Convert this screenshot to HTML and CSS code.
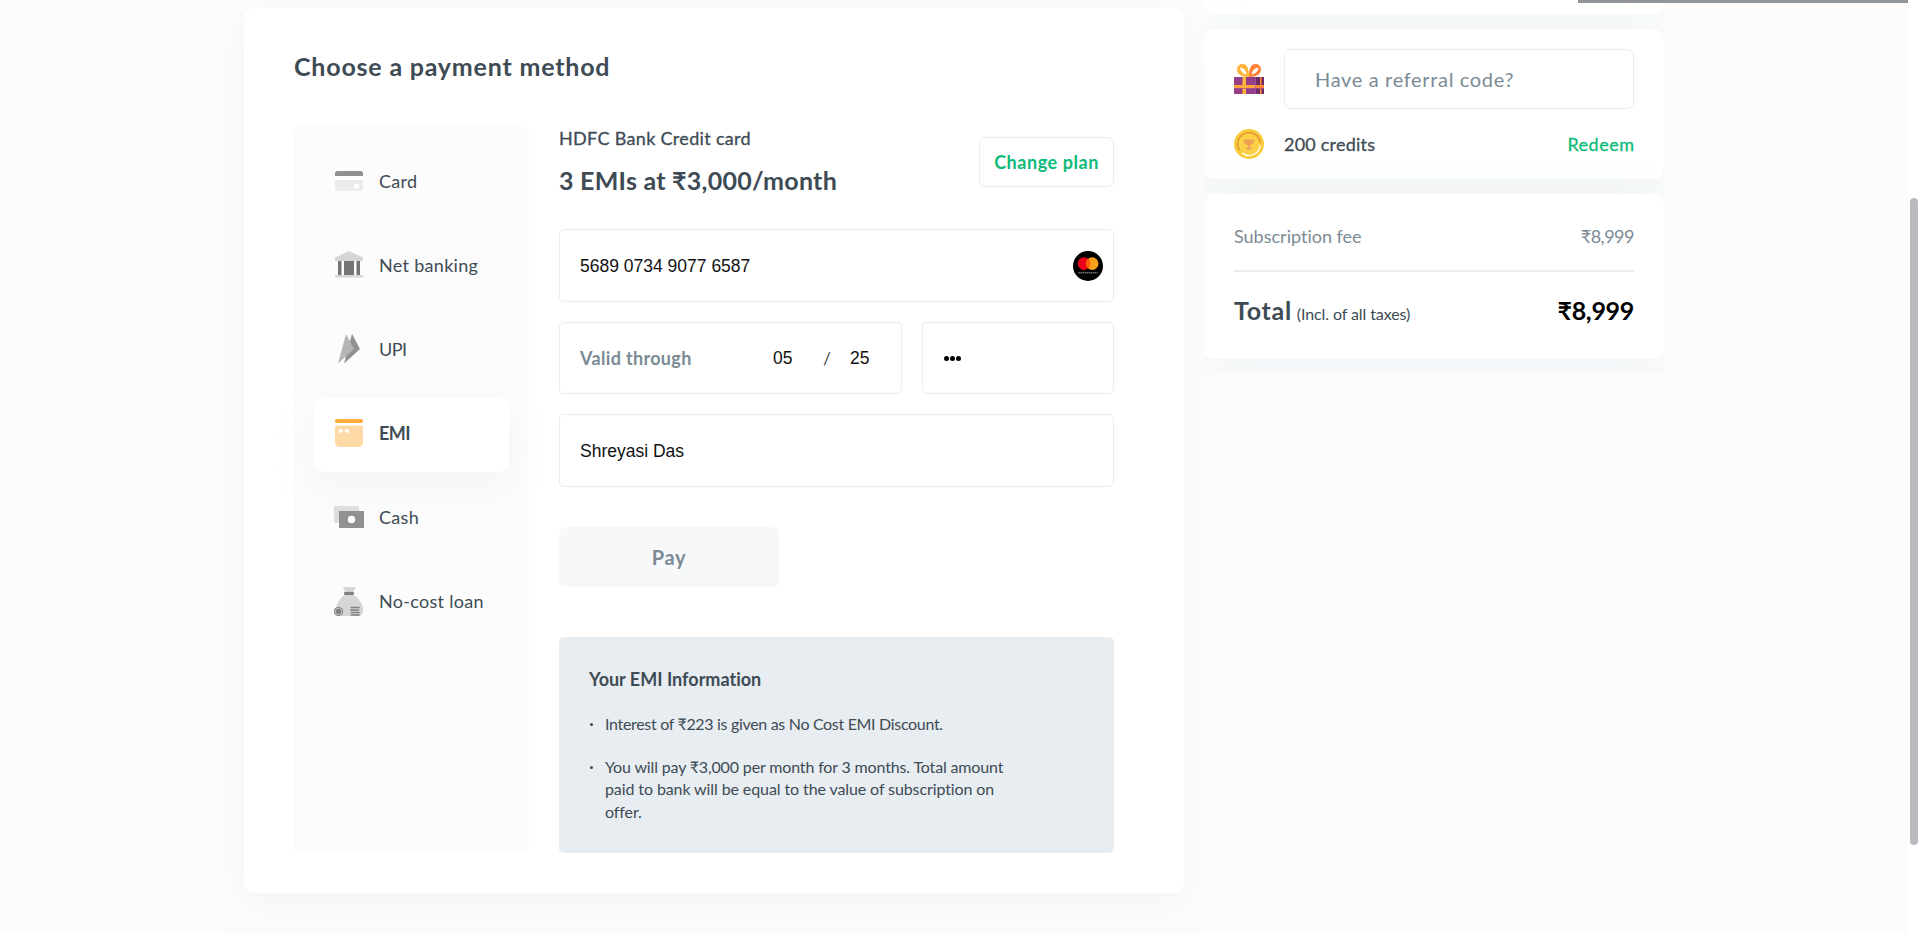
FILE: index.html
```html
<!DOCTYPE html>
<html lang="en">
<head>
<meta charset="utf-8">
<title>Choose a payment method</title>
<link rel="stylesheet" href="styles.css">
</head>
<body>
<div class="page">
  <main class="card payment">
    <h1 class="title">Choose a payment method</h1>
    <div class="columns">
      <nav class="methods">
        <a class="method">
          <svg class="icon" viewBox="0 0 30 30"><path d="M1 10V7.500Q1 5 3.500 5H26.500Q29 5 29 7.500V10Z" fill="#919191"/><path d="M1 10H29V14H1Z" fill="#fff"/><path d="M1 14H29V22.500Q29 25 26.500 25H3.500Q1 25 1 22.500Z" fill="#ebebeb"/><circle cx="22.500" cy="20" r="2.700" fill="#fff"/></svg>
          <span class="label">Card</span></a>
        <a class="method">
          <svg class="icon" viewBox="0 0 30 30"><path d="M1 7.500L15 1L29 7.500V11H1Z" fill="#d6d6d6"/><path d="M4 11H26V25H4Z" fill="#fff"/><path d="M4 11H7.500V25H4ZM10 11H20V25H10ZM22.500 11H26V25H22.500Z" fill="#757575"/><path d="M1 25H29V27.500H1Z" fill="#d6d6d6"/></svg>
          <span class="label">Net banking</span></a>
        <a class="method">
          <svg class="icon" viewBox="0 0 30 30"><path d="M18 0L26 15L10 29.500Z" fill="#919191"/><path d="M12 0L20 15L4 29.500Z" fill="#b5b5b5"/></svg>
          <span class="label caps">UPI</span></a>
        <a class="method active">
          <svg class="icon" viewBox="0 0 30 30"><rect x="1" y="1" width="28" height="4" rx="1.800" fill="#ffad3b"/><path d="M3 7.500H27Q29 7.500 29 9.500V24Q29 29 24 29H6Q1 29 1 24V9.500Q1 7.500 3 7.500Z" fill="#ffd9a6"/><circle cx="6.800" cy="13" r="2" fill="#fff"/><circle cx="13" cy="13" r="2" fill="#fff"/></svg>
          <span class="label caps">EMI</span></a>
        <a class="method">
          <svg class="icon" viewBox="0 0 30 30"><rect x="0" y="4" width="25" height="17" rx=".5" fill="#dedede"/><rect x="5" y="9" width="25" height="17" rx=".5" fill="#919191"/><circle cx="17.500" cy="17.500" r="3.700" fill="#fff"/></svg>
          <span class="label">Cash</span></a>
        <a class="method">
          <svg class="icon" viewBox="0 0 30 30"><path d="M9 1H21.500L19.500 6H11Z" fill="#d6d6d6"/><path d="M10.500 9H19.500C26 13 29 19 29 24Q29 30 24 30H6Q2 30 2 24C2 19 5 13 10.500 9Z" fill="#d6d6d6"/><rect x="10" y="6" width="10" height="3" rx="1.200" fill="#808080"/><circle cx="4.500" cy="25.500" r="4.600" fill="#808080"/><circle cx="4.500" cy="25.500" r="3.300" fill="none" stroke="#d6d6d6" stroke-width=".8"/><path d="M17.500 21.500H25M17 24H24.500M17.500 26.500H25M17.500 29H25" stroke="#808080" stroke-width="1.700" stroke-linecap="round"/></svg>
          <span class="label">No-cost loan</span></a>
      </nav>
      <section class="form">
        <header class="plan">
          <div>
            <div class="bank">HDFC Bank Credit card</div>
            <div class="amount">3 EMIs at ₹3,000/month</div>
          </div>
          <div class="change">Change plan</div>
        </header>
        <div class="fields">
          <div class="field number"><span>5689 0734 9077 6587</span>
            <svg class="brand" viewBox="0 0 30 30"><circle cx="15" cy="15" r="15" fill="#000"/><circle cx="11" cy="12.600" r="6.300" fill="#eb001b"/><circle cx="19.200" cy="12.600" r="6.300" fill="#f79e1b"/><path d="M15.100 7.800A6.300 6.300 0 0 1 15.100 17.400A6.300 6.300 0 0 1 15.100 7.800Z" fill="#ff5f00"/><path d="M5.500 21.700H24.500" stroke="#777" stroke-width="1.600" stroke-dasharray="1.400 .6"/></svg>
          </div>
          <div class="pair">
            <div class="field expiry"><span class="valid">Valid through</span><span class="month">05</span><span class="slash">/</span><span class="year">25</span></div>
            <div class="field cvv"><i class="dot"></i><i class="dot"></i><i class="dot"></i></div>
          </div>
          <div class="field name"><span>Shreyasi Das</span></div>
        </div>
        <div class="pay">Pay</div>
        <div class="info">
          <h2 class="info-title">Your EMI Information</h2>
          <ul class="notes">
            <li class="note interest">Interest of ₹223 is given as No Cost EMI Discount.</li>
            <li class="note"><span class="first">You will pay ₹3,000 per month for 3 months. Total amount</span><br>paid to bank will be equal to the value of subscription on<br>offer.</li>
          </ul>
        </div>
      </section>
    </div>
  </main>
  <aside class="summary">
    <div class="card previous"></div>
    <div class="card offers">
      <div class="referral">
        <svg class="gift" viewBox="0 0 30 30"><path d="M15 13C7 13 3 10 3 5.500C3 2 5.500 0 8.500 0C13 0 15 4 15 13Z" fill="#ffb43c"/><path d="M15 13C23 13 27 10 27 5.500C27 2 24.500 0 21.500 0C17 0 15 4 15 13Z" fill="#ff8438"/><path d="M12.500 10.500Q6.500 9 6 3.500Q12 4.500 12.500 10.500Z" fill="#fff"/><path d="M17.500 10.500Q24 9 24.500 3.500Q18.500 4.500 17.500 10.500Z" fill="#fff"/><rect y="13" width="30" height="17" rx=".7" fill="#933e87"/><path d="M22 13H30V30H22Z" fill="#6e2b64"/><path d="M0 21H30V24H0Z" fill="#ffa53c"/><path d="M8.500 13H12V30H8.500Z" fill="#ffb43c"/><path d="M22 21H30V24H22ZM26 13H27.500V30H26Z" fill="#ff8438"/><path d="M21.500 13V30M0 24.500H30" stroke="#a85a9b" stroke-width=".7"/></svg>
        <div class="code">Have a referral code?</div>
      </div>
      <div class="credits">
        <svg class="coin" viewBox="0 0 30 30"><circle cx="15" cy="15" r="15" fill="#f9ca3a"/><circle cx="15" cy="15" r="11.500" fill="#fbd044"/><path d="M5.500 21A11.300 11.300 0 1 1 26.300 14" fill="none" stroke="#db8a34" stroke-width="1.200"/><path d="M26.300 16A11.300 11.300 0 0 1 8 24" fill="none" stroke="#fff" stroke-width="1.300"/><path d="M9.500 10.500H20.500Q20.500 14 17.500 15.500L16 17V18.500H18V20.500H12V18.500H14V17L12.500 15.500Q9.500 14 9.500 10.500Z" fill="#eda056"/></svg>
        <span class="balance">200 credits</span>
        <span class="redeem">Redeem</span>
      </div>
    </div>
    <div class="card bill">
      <div class="fee"><span>Subscription fee</span><span class="price">₹8,999</span></div>
      <div class="total"><span><b class="total-label">Total</b><small class="taxes">(Incl. of all taxes)</small></span><strong class="sum">₹8,999</strong></div>
    </div>
  </aside>
</div>
<div class="progress"></div>
<div class="track"><div class="thumb"></div></div>
</body>
</html>
```
FILE: styles.css
```css
* { box-sizing: border-box; }
body {
  margin: 0;
  height: 934px;
  overflow: hidden;
  background: #fcfcfc;
  color: #3e4b55;
  font-family: Lato, "Noto Sans", sans-serif;
  font-size: 18px;
  font-variant-ligatures: none;
}
.page { display: flex; align-items: flex-start; gap: 20px; padding-left: 244px; }
.card {
  background: #fff;
  border-radius: 10px;
  box-shadow: 0 10px 40px rgba(228, 235, 241, 0.42);
}
.payment { width: 940px; height: 885px; margin-top: 8px; padding: 40px 70px 0 50px; }
.title { margin: 0 0 42px; font-size: 25px; line-height: 36px; font-weight: 700; letter-spacing: 0.8px; }
.columns { display: flex; gap: 30px; }
.methods {
  width: 235px;
  height: 727px;
  padding: 20px;
  border-radius: 5px;
  background: #fcfcfc;
  display: flex;
  flex-direction: column;
  gap: 10px;
}
.method { display: flex; align-items: center; gap: 15px; height: 74px; padding: 0 0 4px 20px; border-radius: 10px; }
.active { background: #fff; font-weight: 700; box-shadow: 0 15px 40px rgba(228, 235, 241, 0.4); }
.icon { width: 30px; height: 30px; }
.label { letter-spacing: 0.3px; }
.caps { letter-spacing: -0.5px; }

.form { width: 555px; }
.plan { display: flex; justify-content: space-between; height: 103px; }
.bank { line-height: 24px; margin-bottom: 12px; letter-spacing: 0.32px; -webkit-text-stroke: 0.3px; }
.amount { font-size: 25px; line-height: 36px; font-weight: 700; letter-spacing: 0.25px; }
.change {
  width: 135px;
  height: 50px;
  margin-top: 11px;
  border: 1px solid #e9edf1;
  border-radius: 6px;
  text-align: center;
  line-height: 49px;
  font-weight: 700;
  letter-spacing: 0.55px;
  color: #0dba78;
}
.fields { display: flex; flex-direction: column; gap: 20px; }
.field {
  display: flex;
  align-items: center;
  height: 73px;
  padding: 1px 20px 0;
  border: 1px solid #e9edf1;
  border-radius: 5px;
  color: #111;
  font-family: "Liberation Sans", Arial, sans-serif;
  font-size: 17.5px;
}
.number { justify-content: space-between; padding-right: 10px; }
.brand { width: 30px; height: 30px; }
.pair { display: grid; grid-template-columns: 343px 192px; gap: 20px; }
.pair .field { height: 72px; padding-top: 0; }
.valid { width: 193px; color: #7b8b95; font-family: Lato, sans-serif; font-size: 18px; font-weight: 700; letter-spacing: 0.33px; }
.month { width: 50px; }
.slash { width: 27px; color: #3e4b55; font-family: Lato, sans-serif; }
.pair .cvv { gap: 1px; padding-left: 21px; }
.dot { width: 5px; height: 5px; border-radius: 50%; background: #000; }
.pay {
  width: 220px;
  height: 60px;
  margin: 40px 0 50px;
  border-radius: 7px;
  background: #f6f8fa;
  text-align: center;
  font-size: 20px;
  line-height: 60px;
  font-weight: 700;
  letter-spacing: 0.7px;
  color: #7b8b95;
}
.info { height: 216px; padding: 29px 30px; border-radius: 5px; background: #e8edf1; }
.info-title { margin: 0 0 21px; font-size: 18px; line-height: 26px; font-weight: 700; }
.notes { display: flex; flex-direction: column; gap: 20.500px; margin: 0; padding: 0; list-style: none; }
.note { display: block; padding-left: 16px; font-size: 16px; line-height: 22.400px; letter-spacing: -0.1px; white-space: nowrap; }
.note::before { content: ""; float: left; width: 3px; height: 3px; margin: 10px 0 0 -15px; border-radius: 50%; background: #3e4b55; }
.interest { letter-spacing: -0.32px; }
.first { letter-spacing: -0.15px; }

.summary { width: 460px; height: 374px; overflow: hidden; display: flex; flex-direction: column; gap: 15px; background: #fbfcfc; }
.previous { height: 14px; border-radius: 0 0 10px 10px; }
.offers { height: 150px; padding: 20px 30px 0; }
.referral { display: flex; align-items: center; gap: 20px; }
.gift, .coin { width: 30px; height: 30px; }
.code { width: 350px; height: 60px; padding-left: 30px; border: 1px solid #e9edf1; border-radius: 7px; font-size: 20px; line-height: 59px; letter-spacing: 0.66px; color: #7b8b95; }
.credits { display: flex; align-items: center; gap: 20px; margin-top: 20px; -webkit-text-stroke: 0.3px; }
.coin { -webkit-text-stroke: 0; }
.balance { letter-spacing: 0.22px; }
.redeem { margin-left: auto; margin-right: -0.5px; letter-spacing: 0.5px; color: #0dba78; }
.bill { height: 165px; padding: 30px 30px 0; }
.fee { display: flex; justify-content: space-between; height: 48px; line-height: 24px; border-bottom: 2px solid #e9edf1; color: #7b8b95; }
.price { letter-spacing: -0.5px; }
.total { display: flex; justify-content: space-between; margin-top: 20px; font-size: 25px; line-height: 36px; }
.total-label { letter-spacing: 0.7px; }
.taxes { margin-left: 5px; font-size: 16px; letter-spacing: -0.1px; }
.sum { color: #000; letter-spacing: -0.3px; }

.progress { position: absolute; top: 0; left: 1578px; width: 330px; height: 3px; background: #8f9599; }
.track { position: absolute; top: 0; right: 0; width: 12px; height: 934px; padding: 198px 2px 0; background: #fff; }
.thumb { height: 647px; border-radius: 4px; background: #bab9bf; }
```
